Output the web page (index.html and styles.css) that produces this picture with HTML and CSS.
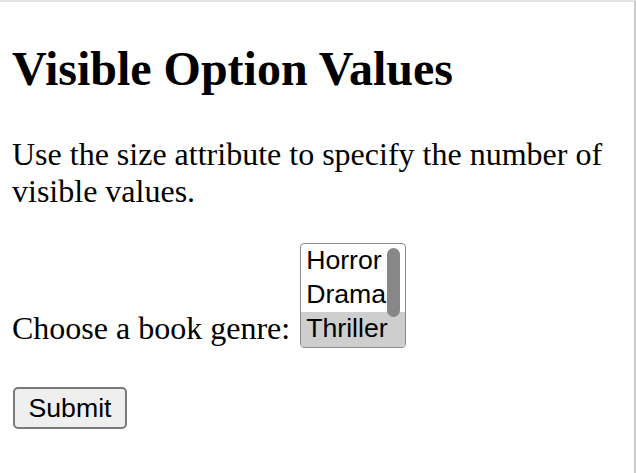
FILE: index.html
```html
<!DOCTYPE html>
<html lang="en">
<head>
<meta charset="utf-8">
<title>Visible Option Values</title>
<link rel="stylesheet" href="styles.css">
</head>
<body>
<h1 class="title">Visible Option Values</h1>
<p class="intro">Use the size attribute to specify the number of visible values.</p>
<form class="form" action="#">
  <div class="field-line">
    <label class="label" for="genre">Choose a book genre:</label>
    <div class="listbox" id="genre" role="listbox" aria-label="genre">
      <div class="option" role="option">Horror</div>
      <div class="option" role="option">Drama</div>
      <div class="option option-selected" role="option" aria-selected="true">Thriller</div>
      <div class="thumb"></div>
    </div>
  </div>
  <div class="actions">
    <button class="submit" type="button">Submit</button>
  </div>
</form>
</body>
</html>
```
FILE: styles.css
```css
html {
  box-sizing: border-box;
  min-height: 100vh;
  border-top: 2px solid #e4e4e4;
  border-right: 2px solid #cbcbcb;
  background: #ffffff;
}

*, *::before, *::after {
  box-sizing: inherit;
}

body {
  margin: 0;
  padding: 0 12px;
  font-family: "Liberation Serif", "Times New Roman", serif;
  color: #000000;
}

.title {
  margin: 39px 0 40px;
  font-size: 48px;
  line-height: 55px;
  font-weight: bold;
}

.intro {
  margin: 0 0 33px;
  font-size: 32px;
  line-height: 37px;
}

.form {
  margin: 0;
}

.field-line {
  font-size: 32px;
  line-height: 37px;
}

.label {
  margin-right: 2px;
}

.listbox {
  position: relative;
  display: inline-block;
  vertical-align: -9px;
  overflow: hidden;
  width: 106px;
  height: 105px;
  border: 1px solid #8a8a8a;
  border-radius: 4px;
  background: #ffffff;
  font-family: "Liberation Sans", Arial, sans-serif;
  font-size: 26.67px;
}

.option {
  height: 34px;
  line-height: 28px;
  padding: 2px 0 4px 5px;
  white-space: nowrap;
  color: #000000;
}

.option-selected {
  height: 35px;
  background: #cecece;
}

.thumb {
  position: absolute;
  top: 4px;
  right: 5px;
  width: 13px;
  height: 69px;
  border-radius: 7px;
  background: #878787;
}

.actions {
  display: flex;
  margin-top: 39px;
}

.submit {
  width: 114px;
  height: 42px;
  margin: 0 0 0 1px;
  padding: 3.5px 0 4.5px;
  border: 2px solid #7a7a7a;
  border-radius: 5px;
  background: #efefef;
  color: #000000;
  font-family: "Liberation Sans", Arial, sans-serif;
  font-size: 26.67px;
  line-height: 30px;
  text-align: center;
}
```
